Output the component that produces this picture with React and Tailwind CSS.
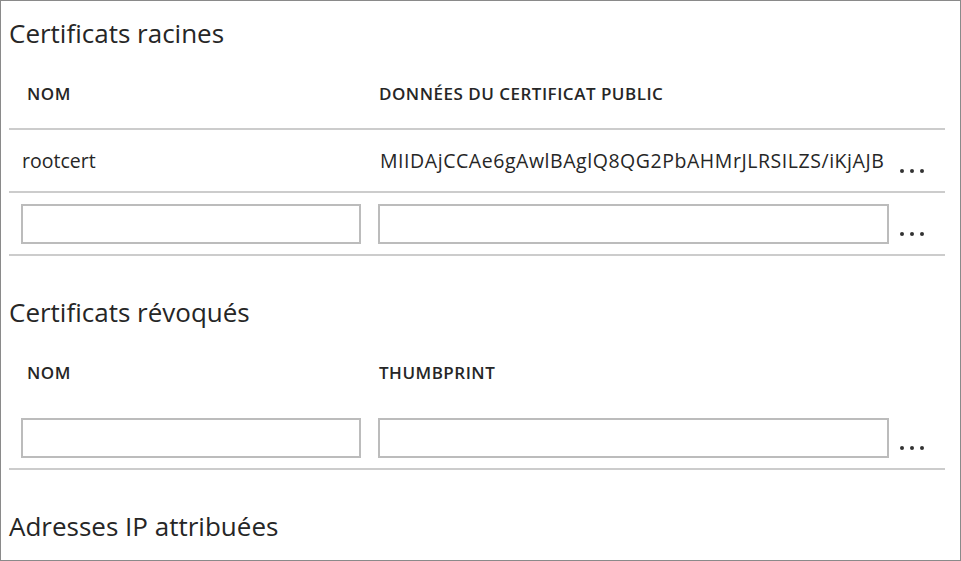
import React from "react";

const Dots = () => (
  <div className="flex items-center gap-[6px] pl-[9px] pt-[20px]">
    <span className="w-[4px] h-[4px] rounded-full bg-[#333]"></span>
    <span className="w-[4px] h-[4px] rounded-full bg-[#333]"></span>
    <span className="w-[4px] h-[4px] rounded-full bg-[#333]"></span>
  </div>
);

const InputRow = () => (
  <div className="grid grid-cols-[360px_522px_1fr] h-[61px] items-center">
    <div className="pl-[12px]">
      <input className="w-[340px] h-[40px] border-2 border-[#bcbcbc] bg-white outline-none" />
    </div>
    <div className="pl-[9px]">
      <input className="w-[511px] h-[40px] border-2 border-[#bcbcbc] bg-white outline-none" />
    </div>
    <Dots />
  </div>
);

const Divider = () => <div className="h-[2px] bg-[#cccccc]"></div>;

const Title = ({ children, className }) => (
  <h2 className={`text-[26px] leading-[32px] text-[#262626] ${className}`}>
    {children}
  </h2>
);

const Header = ({ second }) => (
  <div className="grid grid-cols-[360px_1fr] mt-[35px] pb-[24px] text-[17px] leading-[20px] font-semibold tracking-[0.5px] text-[#262626]">
    <div className="pl-[18px]">NOM</div>
    <div className="pl-[10px]">{second}</div>
  </div>
);

export default function App() {
  return (
    <div
      className="w-[961px] h-[561px] border border-[#8a8a8a] bg-white pl-[8px] pr-[15px] overflow-hidden"
      style={{ fontFamily: '"Open Sans", "Noto Sans", sans-serif' }}
    >
      <Title className="mt-[16px]">Certificats racines</Title>
      <Header second="DONNÉES DU CERTIFICAT PUBLIC" />
      <Divider />
      <div className="grid grid-cols-[360px_522px_1fr] h-[61px] items-center text-[19.5px] text-[#262626]">
        <div className="pl-[13px]">rootcert</div>
        <div className="pl-[11px] whitespace-nowrap overflow-hidden tracking-[0.55px]">
          MIIDAjCCAe6gAwlBAglQ8QG2PbAHMrJLRSILZS/iKjAJB
        </div>
        <Dots />
      </div>
      <Divider />
      <InputRow />
      <Divider />

      <Title className="mt-[40px]">Certificats révoqués</Title>
      <Header second="THUMBPRINT" />
      <InputRow />
      <Divider />

      <Title className="mt-[40px]">Adresses IP attribuées</Title>
    </div>
  );
}
